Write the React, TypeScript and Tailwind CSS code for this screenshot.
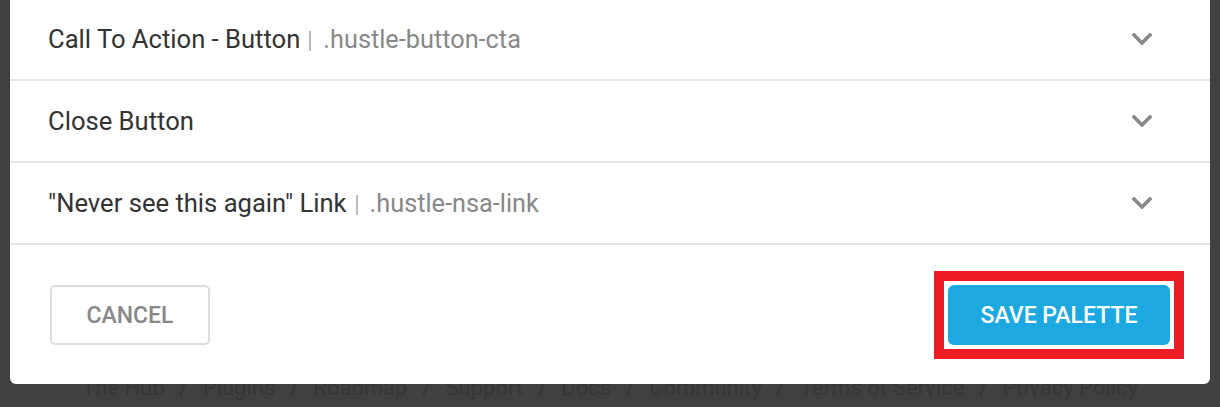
import React from "react";

function Chevron() {
  return (
    <svg width="20" height="12" viewBox="0 0 20 12" fill="none">
      <path d="M2 2 L10 10 L18 2" stroke="#888888" strokeWidth="3.6" strokeLinecap="square" strokeLinejoin="miter" />
    </svg>
  );
}

function Row({ label, cls }: { label: string; cls?: string }) {
  return (
    <div className="h-[82px] flex items-center justify-between border-b-2 border-[#e6e6e6] pl-[38px] pr-[58px]">
      <div className="flex items-center mt-[2px] leading-none whitespace-nowrap">
        <span className="text-[25.6px] text-[#333333]">{label}</span>
        {cls && (
          <>
            <span className="block shrink-0 w-[2px] h-[20px] mt-[2px] ml-[9px] mr-[12px] bg-[#bdbdbd]" />
            <span className="text-[25.3px] text-[#888888]">{cls}</span>
          </>
        )}
      </div>
      <Chevron />
    </div>
  );
}

export default function App() {
  const links = [
    "The Hub",
    "Plugins",
    "Roadmap",
    "Support",
    "Docs",
    "Community",
    "Terms of Service",
    "Privacy Policy",
  ];
  return (
    <div className="min-h-[407px] h-[407px] overflow-hidden bg-[#404040] font-['Roboto',sans-serif]">
      <div className="relative z-10 mx-[10px] -mt-px bg-white rounded-b-[6px]">
        <Row label="Call To Action - Button" cls=".hustle-button-cta" />
        <Row label="Close Button" />
        <Row label={'"Never see this again" Link'} cls=".hustle-nsa-link" />
        <div className="flex items-center justify-between px-[40px] pt-[40px] pb-[39px]">
          <button className="w-[160px] h-[60px] border-2 border-[#dddddd] rounded-[5px] bg-white text-[23px] font-medium text-[#888888] leading-none">
            CANCEL
          </button>
          <div className="relative">
            <div className="absolute -inset-[14px] border-[10px] border-[#ed1c24]" />
            <button className="relative w-[222px] h-[60px] rounded-[6px] bg-[#1ca8e0] text-[23px] font-medium text-white leading-none">
              SAVE PALETTE
            </button>
          </div>
        </div>
      </div>
      <div className="-mt-[7px] flex justify-center text-[22px] leading-[22px] text-[#363636] whitespace-nowrap">
        {links.map((l, i) => (
          <React.Fragment key={l}>
            {i > 0 && <span className="mx-[14.5px]">/</span>}
            <span>{l}</span>
          </React.Fragment>
        ))}
      </div>
    </div>
  );
}
